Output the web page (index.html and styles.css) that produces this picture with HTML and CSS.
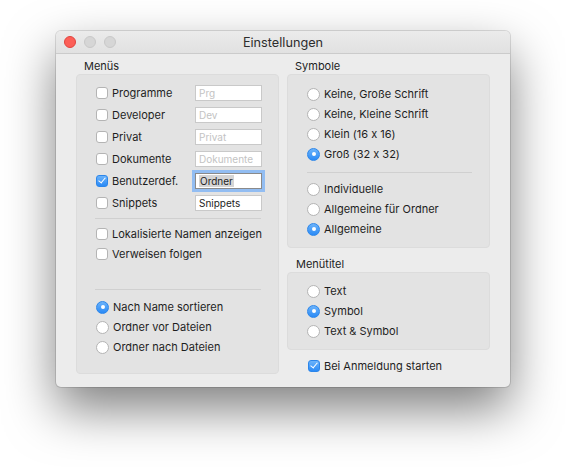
FILE: index.html
```html
<!DOCTYPE html>
<html lang="de">
<head>
    <meta charset="UTF-8">
    <title>Einstellungen</title>
    <link rel="stylesheet" href="styles.css">
</head>
<body>
    <div class="window">
        <div class="titlebar">
            <div class="lights">
                <span class="light close"></span>
                <span class="light"></span>
                <span class="light"></span>
            </div>
            <div class="title">Einstellungen</div>
        </div>

        <div class="content">
            <!-- left column: menus -->
            <div class="column">
                <div class="group-label">Menüs</div>
                <div class="group menus">
                    <div class="menu-row">
                        <div class="option"><span class="check"></span>Programme</div>
                        <div class="field empty">Prg</div>
                    </div>
                    <div class="menu-row">
                        <div class="option"><span class="check"></span>Developer</div>
                        <div class="field empty">Dev</div>
                    </div>
                    <div class="menu-row">
                        <div class="option"><span class="check"></span>Privat</div>
                        <div class="field empty">Privat</div>
                    </div>
                    <div class="menu-row">
                        <div class="option"><span class="check"></span>Dokumente</div>
                        <div class="field empty">Dokumente</div>
                    </div>
                    <div class="menu-row">
                        <div class="option"><span class="check on"></span>Benutzerdef.</div>
                        <div class="field focus"><span class="selection">Ordner</span></div>
                    </div>
                    <div class="menu-row">
                        <div class="option"><span class="check"></span>Snippets</div>
                        <div class="field">Snippets</div>
                    </div>

                    <div class="separator first"></div>

                    <div class="option line"><span class="check"></span>Lokalisierte Namen anzeigen</div>
                    <div class="option line"><span class="check"></span>Verweisen folgen</div>

                    <div class="separator wide"></div>

                    <div class="option line"><span class="radio on"></span>Nach Name sortieren</div>
                    <div class="option line"><span class="radio"></span>Ordner vor Dateien</div>
                    <div class="option line"><span class="radio"></span>Ordner nach Dateien</div>
                </div>
            </div>

            <!-- right column: icons, menu title, login -->
            <div class="column">
                <div class="group-label">Symbole</div>
                <div class="group symbols">
                    <div class="option line"><span class="radio"></span>Keine, Große Schrift</div>
                    <div class="option line"><span class="radio"></span>Keine, Kleine Schrift</div>
                    <div class="option line"><span class="radio"></span>Klein (16 x 16)</div>
                    <div class="option line"><span class="radio on"></span>Groß (32 x 32)</div>

                    <div class="separator"></div>

                    <div class="option line"><span class="radio"></span>Individuelle</div>
                    <div class="option line"><span class="radio"></span>Allgemeine für Ordner</div>
                    <div class="option line"><span class="radio on"></span>Allgemeine</div>
                </div>

                <div class="group-label lower">Menütitel</div>
                <div class="group titles">
                    <div class="option line"><span class="radio"></span>Text</div>
                    <div class="option line"><span class="radio on"></span>Symbol</div>
                    <div class="option line"><span class="radio"></span>Text &amp; Symbol</div>
                </div>

                <div class="option line login"><span class="check on"></span>Bei Anmeldung starten</div>
            </div>
        </div>
    </div>
</body>
</html>
```

FILE: styles.css
```css
:root {
    --window: #ececec;
    --group: #e3e3e3;
    --text: #1e1e1e;
}

body {
    margin: 0;
    height: 467px;
    background: #ffffff;
    font-family: Inter, 'Liberation Sans', Arial, sans-serif;
    font-feature-settings: "calt" 0;
    font-size: 11px;
    color: var(--text);
    overflow: hidden;
}

.window {
    width: 454px;
    height: 356px;
    margin: 31px auto 0;
    background: var(--window);
    border-radius: 5px;
    box-shadow:
        0 0 0 1px rgba(0, 0, 0, 0.12),
        0 22px 50px rgba(0, 0, 0, 0.5);
    overflow: hidden;
}

.titlebar {
    height: 22px;
    display: grid;
    grid-template-columns: 1fr auto 1fr;
    align-items: center;
    background: linear-gradient(#ebebeb, #e1e1e1);
    border-bottom: 1px solid #cbcbcb;
}

.lights {
    display: flex;
    gap: 8px;
    padding-left: 8px;
}

.light {
    width: 10px;
    height: 10px;
    border-radius: 50%;
    background: #d6d6d6;
    border: 1px solid #c8c8c8;
}

.light.close {
    background: #fc5f57;
    border-color: #e0443e;
}

.title {
    font-size: 12.7px;
    color: #2d2d2d;
}

.content {
    display: flex;
    gap: 8px;
    padding: 5px 20px 0;
}

.column {
    width: 203px;
    display: flex;
    flex-direction: column;
}

.group-label {
    height: 15px;
    line-height: 15px;
    padding-left: 8px;
}

.group-label.lower {
    margin-top: 9px;
    padding-left: 9px;
}

.group {
    background: var(--group);
    border: 1px solid #dcdcdc;
    border-radius: 4px;
}

.menus {
    height: 291px;
    padding: 7px 16px 0 19px;
}

.symbols {
    padding: 9px 17px 8px 19px;
}

.titles {
    padding: 8px 17px 8px 19px;
}

.menu-row {
    height: 22px;
    display: flex;
    align-items: center;
    justify-content: space-between;
}

.option {
    display: flex;
    align-items: center;
    gap: 4px;
    white-space: nowrap;
}

.option.line {
    height: 20px;
}

.login {
    margin: 6px 0 0 21px;
}

.separator {
    height: 1px;
    background: #d0d0d0;
    margin: 8px 0 6px;
}

.separator.first {
    margin: 4px 1px 5px -1px;
}

.separator.wide {
    margin: 25px 1px 7px -1px;
}

/* checkboxes and radio buttons */
.check,
.radio {
    flex: none;
    width: 10px;
    height: 10px;
    background: #ffffff;
    border: 1px solid #b4b4b4;
    box-sizing: content-box;
    position: relative;
}

.check {
    border-radius: 3px;
}

.radio {
    width: 11px;
    height: 11px;
    border-radius: 50%;
}

.check.on,
.radio.on {
    background: linear-gradient(#6cb3fa, #2a8af6);
    border-color: #2c86ea;
}

.check.on::after {
    content: '';
    position: absolute;
    left: 3px;
    top: 0;
    width: 3px;
    height: 6px;
    border: solid #ffffff;
    border-width: 0 1.8px 1.8px 0;
    transform: rotate(40deg);
}

.radio.on::after {
    content: '';
    position: absolute;
    left: 3.5px;
    top: 3.5px;
    width: 4px;
    height: 4px;
    border-radius: 50%;
    background: #ffffff;
}

/* text fields */
.field {
    width: 60px;
    height: 14px;
    line-height: 14px;
    padding: 0 2px 0 3px;
    background: #ffffff;
    border: 1px solid #c9c9c9;
    font-size: 10px;
    color: #1e1e1e;
    box-sizing: content-box;
}

.field.empty {
    color: #c3c3c3;
}

.field.focus {
    border-color: #8a8a8a;
    box-shadow: 0 0 0 3px #92bdf2;
}

.selection {
    background: #d5d5d5;
    padding: 0 1px;
}
```
